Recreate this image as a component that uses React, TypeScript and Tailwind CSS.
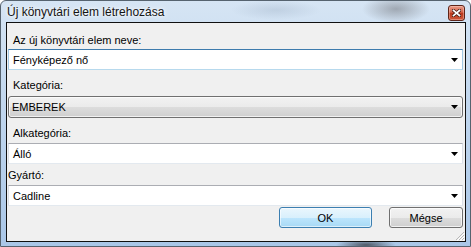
const ui = "font-['Liberation_Sans',Arial,sans-serif] text-[11px] leading-[14px] text-black";

function Arrow() {
  return (
    <svg width="7" height="4" viewBox="0 0 7 4" className="shrink-0">
      <path d="M0 0h7L3.5 4z" fill="#000" />
    </svg>
  );
}

function TextCombo({ value, focused }: { value: string; focused?: boolean }) {
  return (
    <div
      className={`ml-[1px] mr-[2px] h-[21px] flex items-center justify-between pl-[4px] pr-[4px] bg-white border ${
        focused
          ? "border-t-[#3d7bad] border-x-[#a4c9e3] border-b-[#b7d9ed]"
          : "border-t-[#abadb3] border-x-[#dbdfe6] border-b-[#e3e9ef]"
      }`}
    >
      <span>{value}</span>
      <Arrow />
    </div>
  );
}

function Label({ text, className }: { text: string; className: string }) {
  return <div className={className}>{text}</div>;
}

export default function App() {
  return (
    <div className={`w-[471px] h-[247px] ${ui}`}>
      <div className="w-[471px] h-[247px] flex flex-col rounded-t-[6px] border border-[#56636f] bg-[radial-gradient(ellipse_34px_14px_at_395px_8px,rgba(95,95,100,0.45),transparent),radial-gradient(ellipse_45px_10px_at_275px_9px,rgba(120,140,165,0.22),transparent),radial-gradient(ellipse_30px_6px_at_365px_244px,rgba(40,40,45,0.7),transparent),linear-gradient(to_bottom,#d6e5f4,#c2d7ee_40%,#aac7e8)]">
        {/* title bar */}
        <div className="h-[21px] flex items-start justify-between pl-[6px] pr-[5px]">
          <span className="pt-[4px] text-[12px] leading-[15px] text-[#141414] [text-shadow:0_0_6px_#fff,0_0_3px_#fff]">
            Új könyvtári elem létrehozása
          </span>
          <div className="mt-[4px] w-[17px] h-[16px] rounded-[3px] border border-[#5e2418] flex items-center justify-center bg-[linear-gradient(to_bottom,#e99a86,#d5654d_45%,#b8371b_50%,#d0593b)] shadow-[inset_0_0_0_1px_rgba(255,220,210,0.4)]">
            <svg width="9" height="8" viewBox="0 0 9 8">
              <path d="M1.5 1.5l6 5M7.5 1.5l-6 5" stroke="#3f160e" strokeWidth="3.2" strokeLinecap="square" />
              <path d="M1.5 1.5l6 5M7.5 1.5l-6 5" stroke="#fff" strokeWidth="1.7" strokeLinecap="square" />
            </svg>
          </div>
        </div>

        {/* client area */}
        <div className="ml-[5px] mr-[4px] h-[220px] border border-[#101010] bg-[#f0f0f0] flex flex-col">
          <Label text="Az új könyvtári elem neve:" className="h-[26px] pt-[10px] pl-[6px]" />
          <TextCombo value="Fényképező nő" focused />

          <Label text="Kategória:" className="h-[26px] pt-[8px] pl-[6px]" />
          <div className="ml-[1px] mr-[2px] h-[22px] rounded-[3px] border border-[#707070] flex items-center justify-between pl-[3px] pr-[4px] bg-[linear-gradient(to_bottom,#f2f2f2,#ebebeb_50%,#dddddd_50%,#cfcfcf)] shadow-[inset_0_0_0_1px_rgba(255,255,255,0.7)]">
            <span>EMBEREK</span>
            <Arrow />
          </div>

          <Label text="Alkategória:" className="h-[25px] pt-[8px] pl-[6px]" />
          <TextCombo value="Álló" />

          <Label text="Gyártó:" className="h-[21px] pt-[4px] pl-[1px]" />
          <TextCombo value="Cadline" />

          <div className="mt-[1px] h-[21px] flex justify-end gap-[17px] pr-[2px]">
            <button className="w-[93px] h-[21px] rounded-[3px] border border-[#3c7fb1] bg-[linear-gradient(to_bottom,#eaf6fd,#d9f0fc_50%,#bee6fd_50%,#a7d9f5)] shadow-[inset_0_0_0_1px_rgba(255,255,255,0.6)]">
              OK
            </button>
            <button className="w-[74px] h-[21px] rounded-[3px] border border-[#707070] bg-[linear-gradient(to_bottom,#f2f2f2,#ebebeb_50%,#dddddd_50%,#cfcfcf)] shadow-[inset_0_0_0_1px_rgba(255,255,255,0.7)]">
              Mégse
            </button>
          </div>

          <div className="flex-1 flex items-end justify-end">
            <svg width="11" height="11" viewBox="0 0 11 11">
              <path d="M10 2L2 10M10 5L5 10M10 8L8 10" stroke="#b8b8b8" strokeWidth="1" />
              <path d="M11 3L3 11M11 6L6 11M11 9L9 11" stroke="#ffffff" strokeWidth="1" />
            </svg>
          </div>
        </div>
      </div>
    </div>
  );
}
